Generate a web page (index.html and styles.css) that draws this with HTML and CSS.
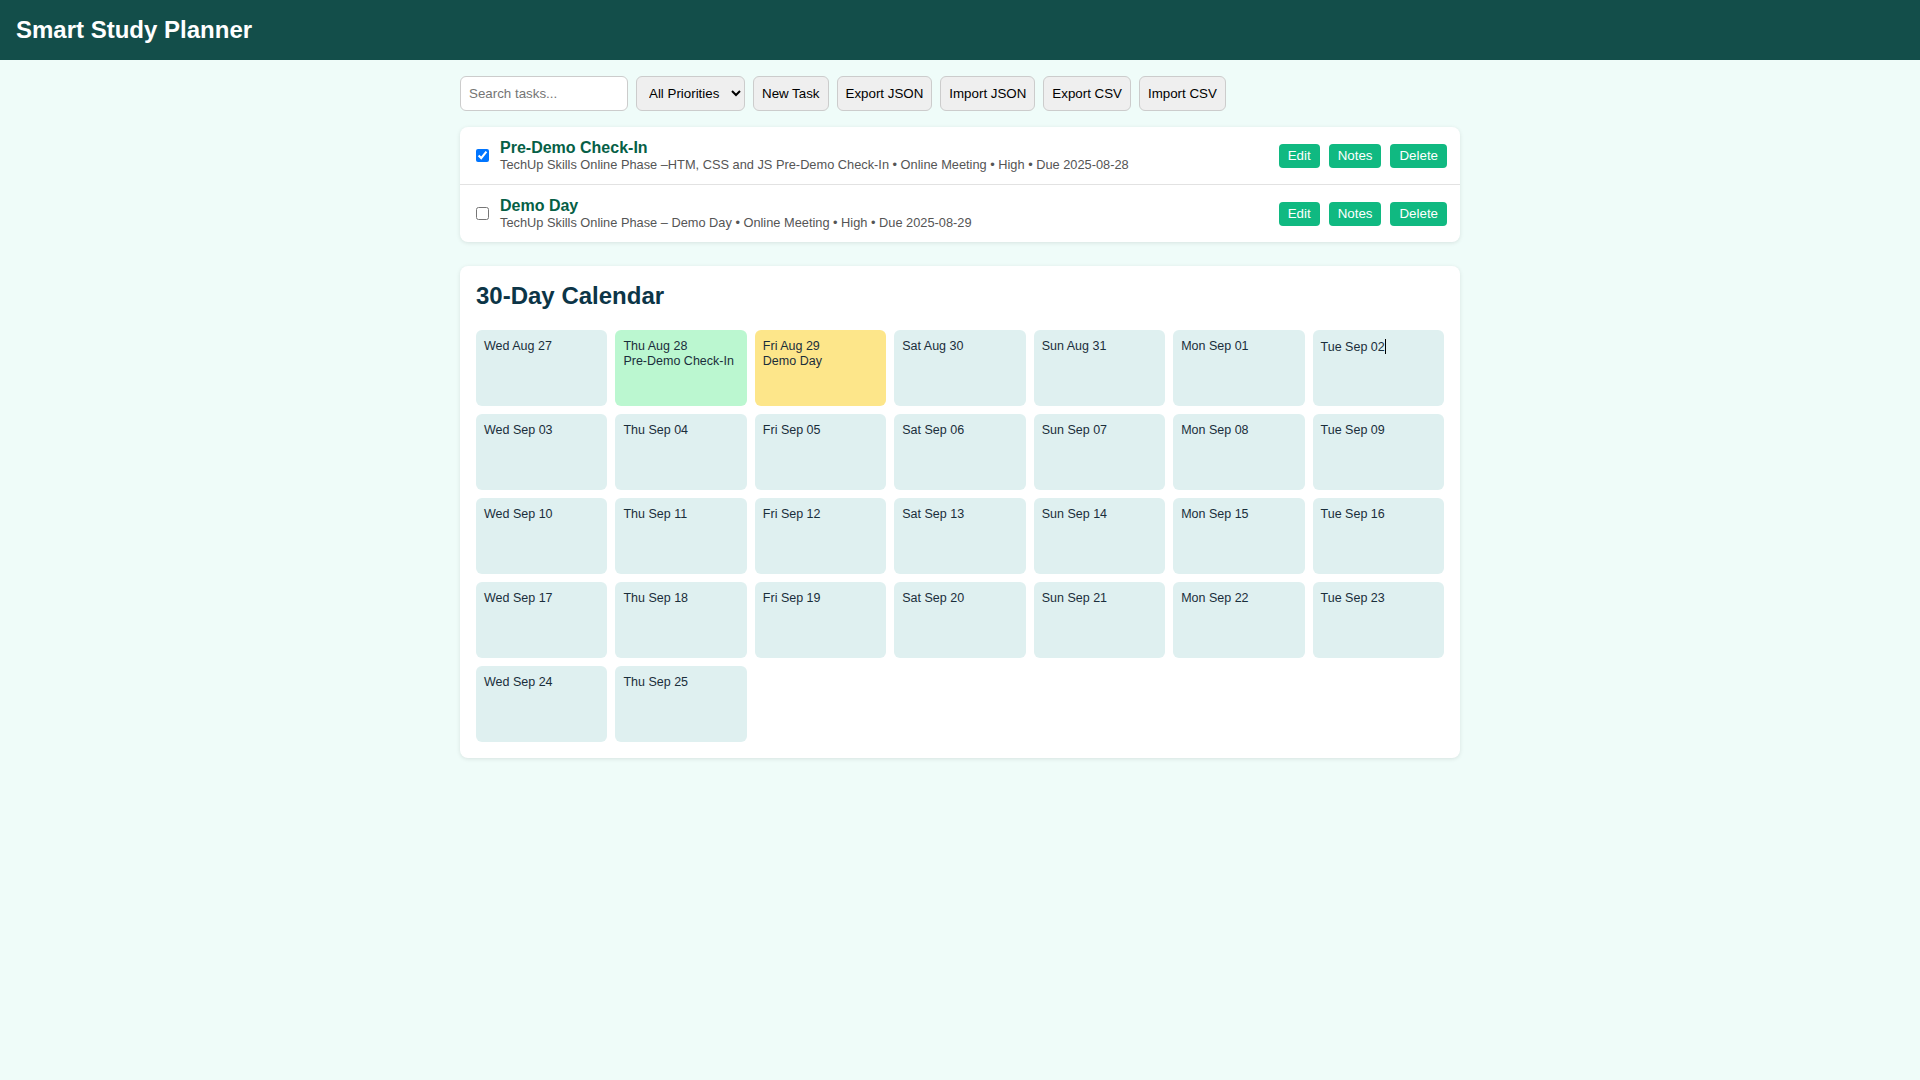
FILE: index.html
```html
<!DOCTYPE html>
<html lang="en">
<head>
<meta charset="utf-8">
<title>Smart Study Planner</title>
<link rel="stylesheet" href="styles.css">
</head>
<body>
<header class="app-header">
  <h1 class="app-title">Smart Study Planner</h1>
</header>
<main class="container">
  <div class="toolbar">
    <input class="search" type="text" placeholder="Search tasks...">
    <select class="select">
      <option>All Priorities</option>
    </select>
    <button class="btn">New Task</button>
    <button class="btn">Export JSON</button>
    <button class="btn">Import JSON</button>
    <button class="btn">Export CSV</button>
    <button class="btn">Import CSV</button>
  </div>

  <section class="card task-list">
    <div class="task-row">
      <input class="task-check" type="checkbox" checked>
      <div class="task-info">
        <div class="task-title">Pre-Demo Check-In</div>
        <div class="task-meta">TechUp Skills Online Phase –HTM, CSS and JS Pre-Demo Check-In • Online Meeting • High • Due 2025-08-28</div>
      </div>
      <div class="task-actions">
        <button class="act">Edit</button>
        <button class="act">Notes</button>
        <button class="act">Delete</button>
      </div>
    </div>
    <div class="task-row">
      <input class="task-check" type="checkbox">
      <div class="task-info">
        <div class="task-title">Demo Day</div>
        <div class="task-meta">TechUp Skills Online Phase – Demo Day • Online Meeting • High • Due 2025-08-29</div>
      </div>
      <div class="task-actions">
        <button class="act">Edit</button>
        <button class="act">Notes</button>
        <button class="act">Delete</button>
      </div>
    </div>
  </section>

  <section class="card calendar">
    <h2 class="cal-title">30-Day Calendar</h2>
    <div class="cal-grid">
      <div class="day">Wed Aug 27</div>
      <div class="day done">Thu Aug 28<br>Pre-Demo Check-In</div>
      <div class="day due">Fri Aug 29<br>Demo Day</div>
      <div class="day">Sat Aug 30</div>
      <div class="day">Sun Aug 31</div>
      <div class="day">Mon Sep 01</div>
      <div class="day">Tue Sep 02<span class="caret"></span></div>
      <div class="day">Wed Sep 03</div>
      <div class="day">Thu Sep 04</div>
      <div class="day">Fri Sep 05</div>
      <div class="day">Sat Sep 06</div>
      <div class="day">Sun Sep 07</div>
      <div class="day">Mon Sep 08</div>
      <div class="day">Tue Sep 09</div>
      <div class="day">Wed Sep 10</div>
      <div class="day">Thu Sep 11</div>
      <div class="day">Fri Sep 12</div>
      <div class="day">Sat Sep 13</div>
      <div class="day">Sun Sep 14</div>
      <div class="day">Mon Sep 15</div>
      <div class="day">Tue Sep 16</div>
      <div class="day">Wed Sep 17</div>
      <div class="day">Thu Sep 18</div>
      <div class="day">Fri Sep 19</div>
      <div class="day">Sat Sep 20</div>
      <div class="day">Sun Sep 21</div>
      <div class="day">Mon Sep 22</div>
      <div class="day">Tue Sep 23</div>
      <div class="day">Wed Sep 24</div>
      <div class="day">Thu Sep 25</div>
    </div>
  </section>
</main>
</body>
</html>
```
FILE: styles.css
```css
* { box-sizing: border-box; }

html, body {
  margin: 0;
  padding: 0;
}

body {
  background: #effcf9;
  font-family: "Liberation Sans", Arial, sans-serif;
  color: #111;
  min-height: 1080px;
}

.app-header {
  background: #134e4a;
  padding: 16px;
}

.app-title {
  margin: 0;
  color: #fff;
  font-size: 24px;
  font-weight: 700;
  line-height: 28px;
}

.container {
  width: 1000px;
  margin: 16px auto 0;
}

.toolbar {
  display: flex;
  gap: 8px;
  align-items: stretch;
  margin-bottom: 16px;
}

.search {
  width: 168px;
  height: 35px;
  padding: 8px;
  border: 1px solid #ccc;
  border-radius: 6px;
  background: #fff;
  font-family: "Liberation Sans", Arial, sans-serif;
  font-size: 13.33px;
  color: #222;
}
.search::placeholder { color: #757575; }

.select {
  width: 109px;
  height: 35px;
  padding: 0 4px 0 8px;
  border: 1px solid #ccc;
  border-radius: 6px;
  background: #efefef;
  font-family: "Liberation Sans", Arial, sans-serif;
  font-size: 13.33px;
  color: #000;
}

.btn {
  height: 35px;
  padding: 0 8px;
  border: 1px solid #ccc;
  border-radius: 6px;
  background: #efefef;
  font-family: "Liberation Sans", Arial, sans-serif;
  font-size: 13.33px;
  color: #000;
}

.card {
  background: #fff;
  border-radius: 8px;
  box-shadow: 0 1px 4px rgba(0, 0, 0, 0.1);
}

.task-list {
  margin-bottom: 24px;
}

.task-row {
  display: flex;
  align-items: center;
  gap: 8px;
  padding: 12px;
  border-bottom: 1px solid #e2e2e2;
}
.task-row:last-child { border-bottom: none; }

.task-check {
  margin: 3px 3px 3px 4px;
  width: 13px;
  height: 13px;
}

.task-info {
  flex: 1;
  min-width: 0;
}

.task-title {
  font-size: 16px;
  font-weight: 700;
  color: #065f46;
  line-height: 18px;
}

.task-meta {
  font-size: 12.8px;
  color: #555;
  line-height: 15px;
}

.task-actions {
  display: flex;
  gap: 9px;
  margin-right: 1px;
}

.act {
  background: #10b981;
  color: #fff;
  border: none;
  border-radius: 4px;
  padding: 4px 9px;
  line-height: 16px;
  font-family: "Liberation Sans", Arial, sans-serif;
  font-size: 13.33px;
}

.calendar {
  padding: 16px;
}

.cal-title {
  margin: 0 0 20px;
  font-size: 24px;
  font-weight: 700;
  line-height: 28px;
  color: #0c3547;
}

.cal-grid {
  display: grid;
  grid-template-columns: repeat(7, 1fr);
  gap: 8px;
}

.day {
  min-height: 76px;
  padding: 9px 8px 8px;
  border-radius: 6px;
  background: #dff0f0;
  font-size: 12.5px;
  line-height: 15px;
  color: #1a2e3b;
}

.day.done { background: #bbf7d0; }
.day.due { background: #fde68a; }

.caret {
  display: inline-block;
  width: 1px;
  height: 15px;
  background: #000;
  vertical-align: -3px;
}
```
